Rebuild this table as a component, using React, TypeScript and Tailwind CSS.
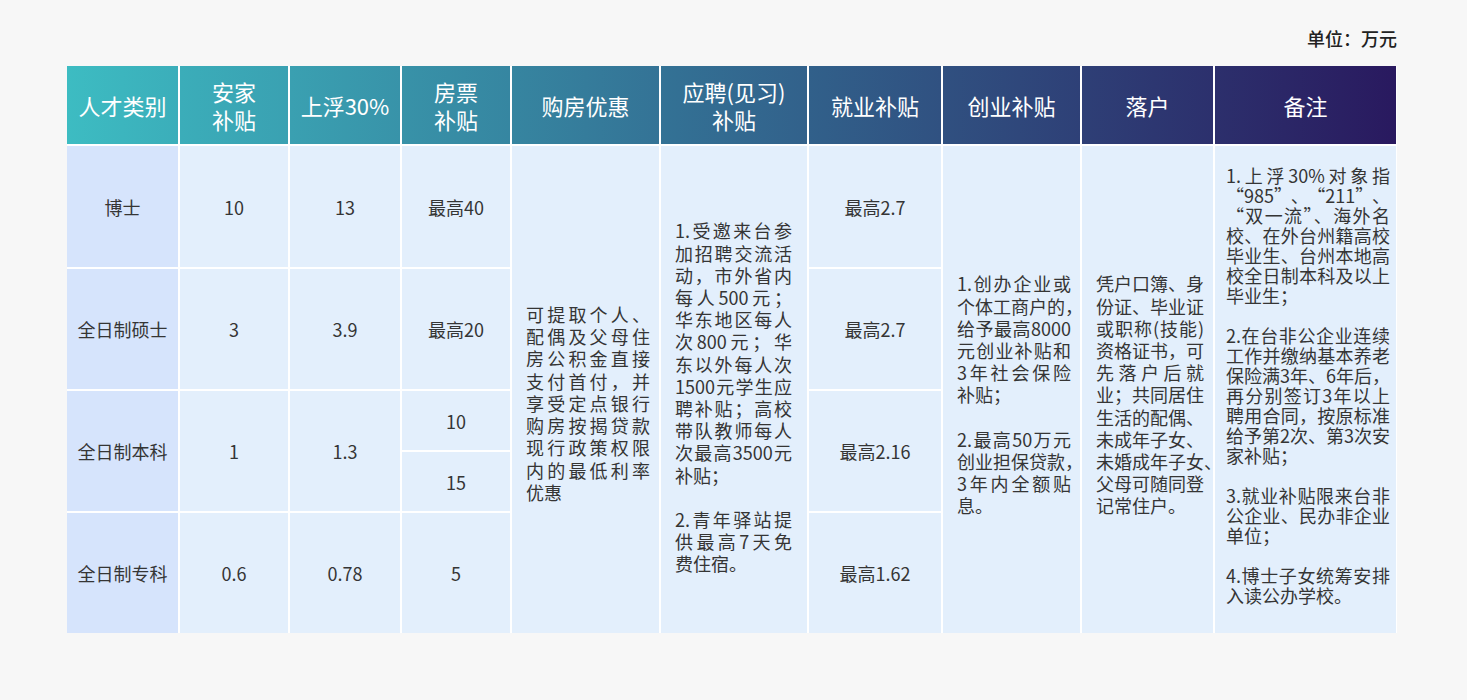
import React from 'react'

// Lines prefixed with "~" overflow their box a little (hanging punctuation) and are left unjustified.
type Para = string[]

function TextBlock({ paras, className }: { paras: Para[]; className: string }) {
  return (
    <div className={className}>
      {paras.map((lines, pi) => (
        <React.Fragment key={pi}>
          {pi > 0 && <div>&nbsp;</div>}
          {lines.map((raw, li) => {
            const overflow = raw.startsWith('~')
            const text = overflow ? raw.slice(1) : raw
            const last = li === lines.length - 1
            const cls = overflow || last
              ? 'whitespace-nowrap'
              : 'whitespace-nowrap text-justify [text-align-last:justify]'
            return (
              <div key={li} className={cls}>
                {text}
              </div>
            )
          })}
        </React.Fragment>
      ))}
    </div>
  )
}

const head = 'flex items-center justify-center text-center text-[22px] leading-[28px] text-white bg-linear-to-r'
const cell = 'flex items-center justify-center bg-[#e3effc] text-[18px] leading-[22px]'
const first = 'flex items-center justify-center bg-[#d6e4fc] text-[18px] leading-[22px]'
const para = 'row-span-5 flex items-center bg-[#e3effc] text-[18px]'

const housing: Para[] = [
  ['可提取个人、', '配偶及父母住', '房公积金直接', '支付首付，并', '享受定点银行', '购房按揭贷款', '现行政策权限', '内的最低利率', '优惠'],
]

const hiring: Para[] = [
  [
    '1.受邀来台参',
    '加招聘交流活',
    '动，市外省内',
    '每人500元；',
    '华东地区每人',
    '次800元；华',
    '东以外每人次',
    '1500元学生应',
    '聘补贴；高校',
    '带队教师每人',
    '次最高3500元',
    '补贴；',
  ],
  ['2.青年驿站提', '供最高7天免', '费住宿。'],
]

const startup: Para[] = [
  ['1.创办企业或', '~个体工商户的，', '给予最高8000', '元创业补贴和', '3年社会保险', '补贴；'],
  ['2.最高50万元', '~创业担保贷款，', '3年内全额贴', '息。'],
]

const hukou: Para[] = [
  [
    '凭户口簿、身',
    '份证、毕业证',
    '或职称(技能)',
    '资格证书，可',
    '先落户后就',
    '业；共同居住',
    '生活的配偶、',
    '未成年子女、',
    '~未婚成年子女、',
    '父母可随同登',
    '记常住户。',
  ],
]

const notes: Para[] = [
  ['1.上浮30%对象指', '“985”、“211”、', '“双一流”、海外名', '校、在外台州籍高校', '毕业生、台州本地高', '校全日制本科及以上', '毕业生；'],
  ['2.在台非公企业连续', '工作并缴纳基本养老', '保险满3年、6年后，', '再分别签订3年以上', '聘用合同，按原标准', '给予第2次、第3次安', '家补贴；'],
  ['3.就业补贴限来台非', '公企业、民办非企业', '单位；'],
  ['4.博士子女统筹安排', '入读公办学校。'],
]

export default function App() {
  return (
    <div
      lang="zh-CN"
      className="min-h-[700px] bg-[#f7f7f7] pt-[27px] font-['Noto_Sans_CJK_SC','Noto_Sans',sans-serif] text-[#353535]"
    >
      <div className="ml-[67px] w-[1330px]">
        <div className="mb-[17px] text-right text-[18px] leading-[22px] font-medium text-[#222]">单位：万元</div>

        <div className="grid grid-cols-[111px_108px_110px_108px_147px_146px_132px_137px_131px_181px] grid-rows-[78px_121px_120px_59px_59px_120px] gap-[2px] bg-white">
          {/* Header */}
          <div className={`${head} from-[#3dbcc2] to-[#3baeba]`}>人才类别</div>
          <div className={`${head} from-[#3badb9] to-[#3aa1b2]`}>安家<br />补贴</div>
          <div className={`${head} from-[#3aa0b1] to-[#3893a9]`}>上浮30%</div>
          <div className={`${head} from-[#3892a8] to-[#3686a1]`}>房票<br />补贴</div>
          <div className={`${head} from-[#3685a0] to-[#347396]`}>购房优惠</div>
          <div className={`${head} from-[#337295] to-[#32618b]`}>应聘(见习)<br />补贴</div>
          <div className={`${head} from-[#31608a] to-[#305181]`}>就业补贴</div>
          <div className={`${head} from-[#305080] to-[#2e4077]`}>创业补贴</div>
          <div className={`${head} from-[#2e3f76] to-[#2c306d]`}>落户</div>
          <div className={`${head} from-[#2c2f6c] to-[#29195f]`}>备注</div>

          {/* 博士 */}
          <div className={first}>博士</div>
          <div className={cell}>10</div>
          <div className={cell}>13</div>
          <div className={cell}>最高40</div>
          <div className={`${para} pl-[14px] pt-[27px]`}>
            <TextBlock paras={housing} className="w-[124px] leading-[22.2px]" />
          </div>
          <div className={`${para} pl-[14px] pt-[15px]`}>
            <TextBlock paras={hiring} className="w-[117px] leading-[22.2px]" />
          </div>
          <div className={cell}>最高2.7</div>
          <div className={`${para} pl-[14px] pt-[10px]`}>
            <TextBlock paras={startup} className="w-[114px] leading-[22.2px]" />
          </div>
          <div className={`${para} pl-[14px] pt-[10px]`}>
            <TextBlock paras={hukou} className="w-[108px] leading-[22.2px]" />
          </div>
          <div className={`${para} pl-[11px] pb-[9px]`}>
            <TextBlock paras={notes} className="w-[164px] leading-[20px]" />
          </div>

          {/* 全日制硕士 */}
          <div className={first}>全日制硕士</div>
          <div className={cell}>3</div>
          <div className={cell}>3.9</div>
          <div className={cell}>最高20</div>
          <div className={cell}>最高2.7</div>

          {/* 全日制本科 */}
          <div className={`${first} row-span-2`}>全日制本科</div>
          <div className={`${cell} row-span-2`}>1</div>
          <div className={`${cell} row-span-2`}>1.3</div>
          <div className={cell}>10</div>
          <div className={`${cell} row-span-2`}>最高2.16</div>
          <div className={cell}>15</div>

          {/* 全日制专科 */}
          <div className={first}>全日制专科</div>
          <div className={cell}>0.6</div>
          <div className={cell}>0.78</div>
          <div className={cell}>5</div>
          <div className={cell}>最高1.62</div>
        </div>
      </div>
    </div>
  )
}
